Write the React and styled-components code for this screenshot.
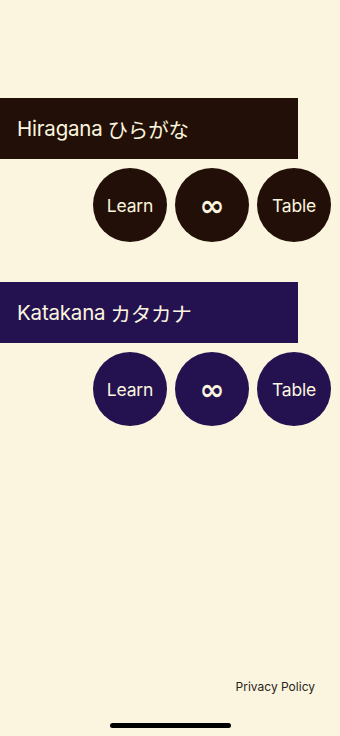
import React from 'react'
import styled, { createGlobalStyle } from 'styled-components'

const Global = createGlobalStyle`
  html, body { margin: 0; padding: 0; background: #fbf5df; }
  body { font-family: Inter, "Noto Sans CJK JP", sans-serif; }
`;

const Screen = styled.div`
  width: 340px;
  height: 736px;
  box-sizing: border-box;
  padding-top: 98px;
  display: flex;
  flex-direction: column;
  background: #fbf5df;
  overflow: hidden;
`;

const Section = styled.div`
  display: flex;
  flex-direction: column;
  gap: 9px;
  margin-bottom: 40px;
`;

const Banner = styled.div`
  width: 298px;
  height: 61px;
  box-sizing: border-box;
  padding-left: 17px;
  display: flex;
  align-items: center;
  background: ${({ $color }) => $color};
  color: #fbf5df;
  font-size: 20.5px;
  font-family: Inter, "Noto Sans CJK JP", sans-serif;
  letter-spacing: -0.2px;
`;

const Kana = styled.span`
  margin-left: 5px;
  font-family: "Noto Sans CJK JP", sans-serif;
  font-weight: 400;
`;

const Buttons = styled.div`
  display: flex;
  justify-content: flex-end;
  gap: 8px;
  padding-right: 9px;
`;

const Circle = styled.div`
  width: 74px;
  height: 74px;
  border-radius: 50%;
  background: ${({ $color }) => $color};
  color: #fbf5df;
  display: flex;
  align-items: center;
  justify-content: center;
  font-size: ${({ $big }) => ($big ? '30px' : '17.5px')};
  font-weight: ${({ $big }) => ($big ? 700 : 400)};
  font-family: ${({ $big }) => ($big ? '"DejaVu Sans", sans-serif' : 'Inter, sans-serif')};
  letter-spacing: -0.2px;
`;

const Spacer = styled.div`
  flex: 1;
`;

const Footer = styled.div`
  display: flex;
  justify-content: flex-end;
  padding-right: 25px;
  font-size: 12px;
  color: #2a2420;
  margin-bottom: 29px;
`;

const HomeBar = styled.div`
  align-self: center;
  width: 121px;
  height: 5px;
  border-radius: 3px;
  background: #000;
  margin-bottom: 8px;
`;

const groups = [
  { name: 'Hiragana', kana: 'ひらがな', color: '#221008' },
  { name: 'Katakana', kana: 'カタカナ', color: '#241150' },
]

const App = () => {
  return (
    <Screen>
      <Global />
      {groups.map((g) => (
        <Section key={g.name}>
          <Banner $color={g.color}>
            {g.name}<Kana>{g.kana}</Kana>
          </Banner>
          <Buttons>
            <Circle $color={g.color}>Learn</Circle>
            <Circle $color={g.color} $big>∞</Circle>
            <Circle $color={g.color}>Table</Circle>
          </Buttons>
        </Section>
      ))}
      <Spacer />
      <Footer>Privacy Policy</Footer>
      <HomeBar />
    </Screen>
  )
}

export default App
